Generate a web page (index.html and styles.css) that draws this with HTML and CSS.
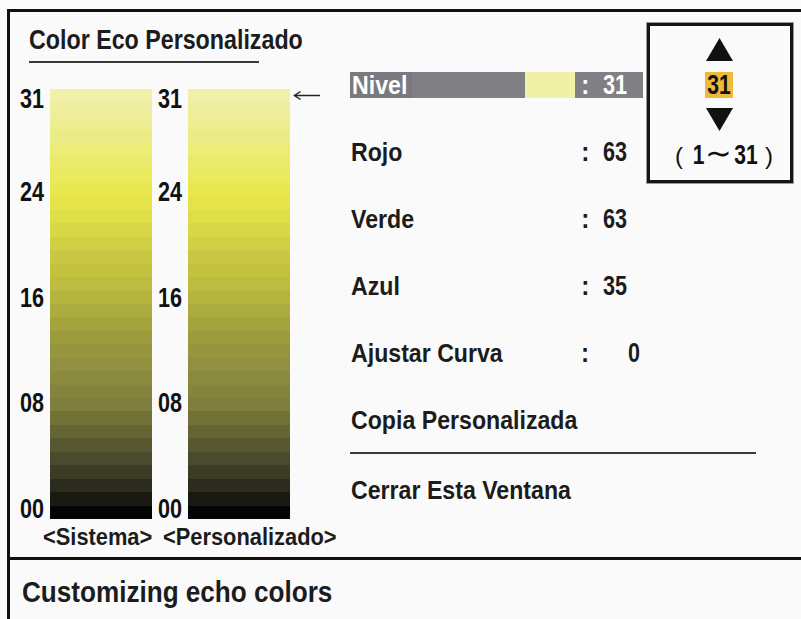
FILE: index.html
```html
<!DOCTYPE html>
<html lang="es">
<head>
<meta charset="utf-8">
<title>Color Eco Personalizado</title>
<link rel="stylesheet" href="styles.css">
</head>
<body>
<div class="screen">
  <section class="panel">
    <div class="left">
      <h1 class="title"><span class="cond">Color Eco Personalizado</span></h1>
      <div class="rule"></div>
      <div class="charts">
        <div class="chart">
          <div class="scale">
            <span class="tick r1">31</span>
            <span class="tick r8">24</span>
            <span class="tick r16">16</span>
            <span class="tick r24">08</span>
            <span class="tick r32">00</span>
          </div>
          <div class="bar ramp"></div>
        </div>
        <div class="chart">
          <div class="scale">
            <span class="tick r1">31</span>
            <span class="tick r8">24</span>
            <span class="tick r16">16</span>
            <span class="tick r24">08</span>
            <span class="tick r32">00</span>
          </div>
          <div class="bar ramp"></div>
          <svg class="pointer" width="28" height="11" viewBox="0 0 28 11"><path d="M1.5 5.5 H27" fill="none" stroke="#222" stroke-width="1.5"/><path d="M7.5 1.5 L1.5 5.5 L7.5 9.5" fill="none" stroke="#222" stroke-width="1.5"/></svg>
        </div>
      </div>
      <div class="captions">
        <span class="caption cap-sys"><span class="cond">&lt;Sistema&gt;</span></span>
        <span class="caption"><span class="cond">&lt;Personalizado&gt;</span></span>
      </div>
    </div>

    <div class="menu">
      <div class="row row-active">
        <span class="label label-active"><span class="cond">Nivel</span></span>
        <span class="fill"></span>
        <span class="swatch"></span>
        <span class="val"><span class="colon">:</span><span class="num">31</span></span>
      </div>
      <div class="row">
        <span class="label label-wide"><span class="cond">Rojo</span></span>
        <span class="val"><span class="colon">:</span><span class="num">63</span></span>
      </div>
      <div class="row">
        <span class="label label-wide"><span class="cond">Verde</span></span>
        <span class="val"><span class="colon">:</span><span class="num">63</span></span>
      </div>
      <div class="row">
        <span class="label label-wide"><span class="cond">Azul</span></span>
        <span class="val"><span class="colon">:</span><span class="num">35</span></span>
      </div>
      <div class="row">
        <span class="label label-wide"><span class="cond">Ajustar Curva</span></span>
        <span class="val"><span class="colon">:</span><span class="num num-shift">0</span></span>
      </div>
      <div class="row row-copy">
        <span class="label label-wide"><span class="cond">Copia Personalizada</span></span>
      </div>
      <div class="divider"></div>
      <div class="row row-last">
        <span class="label label-wide"><span class="cond">Cerrar Esta Ventana</span></span>
      </div>
    </div>

    <div class="popup">
      <svg class="tri tri-up" width="27" height="23" viewBox="0 0 27 23"><polygon points="13.5,0 27,23 0,23" fill="#111"/></svg>
      <span class="current"><span class="digits">31</span></span>
      <svg class="tri" width="27" height="23" viewBox="0 0 27 23"><polygon points="0,0 27,0 13.5,23" fill="#111"/></svg>
      <span class="range">
        <span class="paren">(</span>
        <span class="rdig">1</span>
        <span class="wave">∼</span>
        <span class="rdig">31</span>
        <span class="paren paren-r">)</span>
      </span>
    </div>
  </section>
  <footer class="footer"><span class="cond">Customizing echo colors</span></footer>
</div>
</body>
</html>
```
FILE: styles.css
```css
html, body {
  margin: 0;
  padding: 0;
  background: #fbfbfb;
}

body {
  font-family: "Liberation Sans", Arial, sans-serif;
  color: #1c1c1c;
  width: 801px;
  height: 619px;
  overflow: hidden;
}

.cond {
  display: inline-block;
  white-space: nowrap;
  transform-origin: 0 50%;
}

.screen {
  margin: 9px 0 0 7px;
  border-left: 3px solid #111;
  border-top: 3px solid #111;
  height: 607px;
  background: #fafafa;
}

.panel {
  position: relative;
  display: flex;
  height: 545px;
  border-bottom: 3px solid #111;
}

/* ---------- left side ---------- */
.left {
  width: 340px;
  flex: none;
}

.title {
  margin: 0;
  padding: 13px 0 0 19px;
  font-size: 28px;
  line-height: 30px;
  font-weight: bold;
}

.title .cond {
  transform: scaleX(0.83);
}

.rule {
  margin: 6px 0 0 19px;
  width: 230px;
  height: 2px;
  background: #3a3a3a;
}

.charts {
  display: flex;
  margin-top: 26px;
  padding-left: 12px;
  gap: 8px;
}

.chart {
  display: flex;
  gap: 4px;
}

.scale {
  width: 24px;
  height: 430px;
  display: grid;
  grid-template-columns: 24px;
  grid-template-rows: repeat(32, 1fr);
}

.tick {
  align-self: center;
  width: 30px;
  margin: 0 2px 0 -8px;
  text-align: right;
  font-weight: bold;
  font-size: 27px;
  line-height: 20px;
  color: #111;
  transform: scaleX(0.8);
  transform-origin: 100% 50%;
  white-space: nowrap;
}

.r1 { grid-row: 1; }
.r8 { grid-row: 8; }
.r16 { grid-row: 16; }
.r24 { grid-row: 24; }
.r32 { grid-row: 32; }

.bar {
  width: 102px;
  height: 430px;
}

.ramp {
  background: linear-gradient(to bottom,
    #f0f0a8 0 3.125%, #eeee9e 3.125% 6.25%, #eeee92 6.25% 9.375%, #ecec86 9.375% 12.5%,
    #ecec78 12.5% 15.625%, #eaea6a 15.625% 18.75%, #eaea5c 18.75% 21.875%, #e8e84e 21.875% 25%,
    #e4e44a 25% 28.125%, #dede48 28.125% 31.25%, #d8d846 31.25% 34.375%, #d0d044 34.375% 37.5%,
    #c8c842 37.5% 40.625%, #c2c240 40.625% 43.75%, #bcbc40 43.75% 46.875%, #b4b43e 46.875% 50%,
    #acac3e 50% 53.125%, #a4a43e 53.125% 56.25%, #9c9c3e 56.25% 59.375%, #96963e 59.375% 62.5%,
    #90903e 62.5% 65.625%, #8a8a3e 65.625% 68.75%, #84843e 68.75% 71.875%, #7e7e3e 71.875% 75%,
    #727238 75% 78.125%, #646434 78.125% 81.25%, #585830 81.25% 84.375%, #4a4a2c 84.375% 87.5%,
    #3c3c26 87.5% 90.625%, #2c2c1e 90.625% 93.75%, #1a1a12 93.75% 96.875%, #040404 96.875% 100%);
}

.pointer {
  margin: 1px 0 0 -1px;
  flex: none;
}

.captions {
  display: flex;
  padding-left: 33px;
  margin-top: 6px;
  font-size: 24px;
  line-height: 24px;
  font-weight: bold;
}

.caption .cond {
  transform: scaleX(0.91);
}

.cap-sys {
  width: 120px;
  flex: none;
}

/* ---------- menu ---------- */
.menu {
  padding-top: 60px;
  width: 406px;
  flex: none;
}

.row {
  display: grid;
  grid-template-columns: 62px 113px 50px 68px;
  width: 293px;
  height: 26px;
  margin-bottom: 41px;
}

.row-active {
  background: #808084;
}

.label {
  font-size: 26px;
  line-height: 26px;
  font-weight: bold;
  padding-left: 1px;
  white-space: nowrap;
}

.label .cond {
  transform: scaleX(0.89);
}

.label-wide {
  grid-column: 1 / 4;
}

.label-active {
  background: #7a7a7e;
  color: #fff;
  padding-left: 2px;
}

.swatch {
  background: #f0f0a6;
}

.val {
  display: flex;
  padding-left: 5px;
  font-weight: bold;
  font-size: 27px;
  line-height: 26px;
}

.row-active .val {
  color: #fff;
}

.colon {
  width: 23px;
  transform: scaleX(0.9);
}

.num {
  display: inline-block;
  transform: scaleX(0.8);
  transform-origin: 0 50%;
}

.num-shift {
  margin-left: 29px;
}

.row-copy {
  margin-bottom: 19px;
}

.divider {
  width: 406px;
  height: 2px;
  background: #3a3a3a;
}

.row-last {
  margin-top: 23px;
}

/* ---------- popup ---------- */
.popup {
  position: absolute;
  left: 637px;
  top: 11px;
  width: 140px;
  height: 154px;
  border: 3px solid #151515;
  box-shadow: 0 0 0 1px #9a9a9a;
  background: #fafafa;
  display: flex;
  flex-direction: column;
  align-items: center;
}

.tri {
  display: block;
  margin-left: -2px;
}

.tri-up {
  margin-top: 12px;
}

.current {
  margin: 11px 0 10px -2px;
  width: 28px;
  height: 26px;
  background: #f0b838;
  display: flex;
  justify-content: center;
  font-weight: bold;
  font-size: 27px;
  line-height: 26px;
  color: #111;
}

.digits {
  display: inline-block;
  transform: scaleX(0.78);
}

.range {
  margin-top: 9px;
  margin-left: 8px;
  display: flex;
  align-items: baseline;
  font-weight: bold;
  font-size: 27px;
  line-height: 26px;
  color: #111;
}

.paren {
  font-weight: normal;
  font-size: 24px;
  margin-right: 10px;
}

.paren-r {
  margin: 0 0 0 6px;
}

.rdig {
  display: inline-block;
  transform: scaleX(0.78);
  transform-origin: 50% 50%;
  margin: 0 -2px;
}

.wave {
  font-family: "DejaVu Sans", sans-serif;
  font-weight: normal;
  font-size: 32px;
  margin: 0 1px;
}

/* ---------- footer ---------- */
.footer {
  padding: 16px 0 0 12px;
  font-size: 29px;
  line-height: 32px;
  font-weight: bold;
}

.footer .cond {
  transform: scaleX(0.9);
}
```
